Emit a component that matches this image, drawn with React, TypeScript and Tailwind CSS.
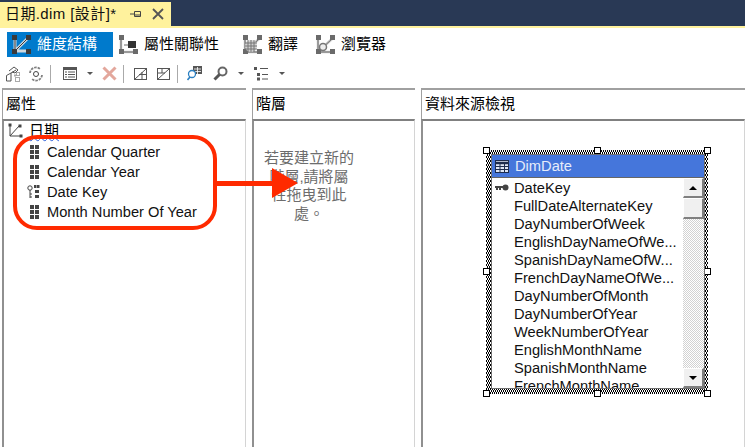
import type { ReactNode } from 'react';

const font = "font-['Liberation_Sans','Noto_Sans_CJK_TC',sans-serif]";

const columns = [
  'DateKey',
  'FullDateAlternateKey',
  'DayNumberOfWeek',
  'EnglishDayNameOfWe...',
  'SpanishDayNameOfW...',
  'FrenchDayNameOfWe...',
  'DayNumberOfMonth',
  'DayNumberOfYear',
  'WeekNumberOfYear',
  'EnglishMonthName',
  'SpanishMonthName',
  'FrenchMonthName',
];

type TabKind = 'dim' | 'attr' | 'trans' | 'browse';

function CubeTabIcon({ active, kind }: { active?: boolean; kind: TabKind }) {
  const halo = active ? '#cfd8de' : '#c9c9c9';
  const node = active ? '#3a3a3a' : '#6a6a6a';
  return (
    <svg width="24" height="22" viewBox="0 0 24 22" fill="none">
      {kind === 'dim' ? (
        <>
          <path d="M5 4v13M5 17h13M6 16L18 4" stroke={halo} strokeWidth="3" />
          <path d="M5 4v13M5 17L18 4" stroke={node} strokeWidth="1" />
        </>
      ) : (
        <>
          <path d="M4 3v15h15" stroke={halo} strokeWidth="2.500" />
          <path d="M4 3v15h15" stroke={node} strokeWidth="1" />
          {kind !== 'attr' && <path d="M5 17L19 4" stroke={halo} strokeWidth="2.500" />}
          {kind !== 'attr' && <path d="M5 17L19 4" stroke={node} strokeWidth="1" />}
        </>
      )}
      <rect x="2" y="1" width="5" height="5" fill={node} />
      {kind !== 'attr' && <rect x="16" y="1" width="5" height="5" fill={node} />}
      <rect x="2" y="15" width="5" height="5" fill={node} />
      <rect x="16" y="15" width="5" height="5" fill={node} />
      {kind === 'attr' && (
        <>
          <path d="M7 11h5" stroke={node} />
          <rect x="11" y="7" width="8" height="7" fill="#333" />
        </>
      )}
      {kind === 'trans' && (
        <>
          <circle cx="10" cy="12" r="6" fill="#d0d0d0" />
          <path d="M4 12h12M4 9h12M4 15h12M7 6v12M10 6v12M13 6v12" stroke="#777" strokeWidth="1" />
        </>
      )}
      {kind === 'browse' && <circle cx="9" cy="13" r="3.500" stroke="#777" strokeWidth="1.500" fill="#eee" />}
    </svg>
  );
}

function ViewTab({ label, kind, active, className = '' }: { label: string; kind: TabKind; active?: boolean; className?: string }) {
  return (
    <div className={`flex h-[25px] items-center gap-[3px] pl-[3px] text-[15px] ${active ? 'bg-[#007acc] pr-[16px] text-white' : 'text-black'} ${className}`}>
      <CubeTabIcon kind={kind} active={active} />
      <span>{label}</span>
    </div>
  );
}

function Sep({ className }: { className: string }) {
  return <div className={`h-[18px] w-px bg-[#aaa] ${className}`} />;
}

function Caret({ className }: { className: string }) {
  return <div className={`h-0 w-0 border-x-[3px] border-t-[3px] border-x-transparent border-t-[#555] ${className}`} />;
}

function Toolbar() {
  return (
    <div className="flex h-[28px] items-center pl-[6px] pb-[1px]">
      <svg width="16" height="16" viewBox="0 0 16 16" fill="none" stroke="#555">
        <path d="M0.500 9.500L5 7v8H0.500zM5 7l5-3M3 5l5-4 4 3-3 3-3-1M9 8.500v2" />
        <rect x="10.500" y="6.500" width="3" height="3" strokeDasharray="1 1" />
        <rect x="9.500" y="11.500" width="4" height="4" strokeDasharray="1 1" />
      </svg>
      <svg className="ml-[6px]" width="16" height="16" viewBox="0 0 16 16" fill="none" stroke="#808080" strokeWidth="1.800">
        <path d="M2 7a6 6 0 0 1 10-4M14 9a6 6 0 0 1-10 4" strokeDasharray="2.500 1" />
        <circle cx="8" cy="8" r="2.500" strokeWidth="1" stroke="#444" />
      </svg>
      <Sep className="ml-[6px]" />
      <svg className="ml-[12px]" width="14" height="13" viewBox="0 0 14 13" fill="none" stroke="#555">
        <rect x="0.500" y="0.500" width="13" height="12" />
        <path d="M0 2h14" strokeWidth="2" />
        <path d="M2 5h2M5 5h7M2 7.500h2M5 7.500h7M2 10h2M5 10h7" strokeWidth="1" />
      </svg>
      <Caret className="ml-[10px]" />
      <svg className="ml-[9px]" width="15" height="15" viewBox="0 0 15 15" stroke="#e3a79c" strokeWidth="3">
        <path d="M1.500 1.500l12 12M13.500 1.500l-12 12" />
      </svg>
      <Sep className="ml-[6px]" />
      <svg className="ml-[10px]" width="13" height="12" viewBox="0 0 13 12" fill="none" stroke="#555">
        <rect x="0.500" y="0.500" width="12" height="11" />
        <path d="M1 11L12 1M5 6.500h7M8 4v7" strokeWidth="1" />
      </svg>
      <svg className="ml-[10px]" width="13" height="12" viewBox="0 0 13 12" fill="none" stroke="#555">
        <rect x="0.500" y="0.500" width="12" height="11" />
        <path d="M1 11L12 1M1 5h7M5 1v4" strokeWidth="1" />
      </svg>
      <Sep className="ml-[7px]" />
      <svg className="ml-[9px]" width="15" height="15" viewBox="0 0 15 15" fill="none">
        <rect x="6" y="0" width="9" height="8" fill="#555" />
        <path d="M7 3h7M7 5.500h7M10.500 1v7" stroke="#fff" strokeWidth="0.800" />
        <circle cx="5" cy="8" r="3.500" fill="#fff" stroke="#2a7fc1" strokeWidth="1.300" />
        <path d="M3 11l-2.500 3" stroke="#2a7fc1" strokeWidth="1.600" />
      </svg>
      <svg className="ml-[11px]" width="15" height="15" viewBox="0 0 15 15" fill="none">
        <circle cx="9.500" cy="5.500" r="4" fill="#fff" stroke="#666" strokeWidth="2" />
        <path d="M6.500 8.500l-5 5" stroke="#555" strokeWidth="3" />
      </svg>
      <Caret className="ml-[10px]" />
      <svg className="ml-[10px]" width="15" height="15" viewBox="0 0 15 15" fill="none" stroke="#555">
        <path d="M0 1h3v3H0zM3 7h3v3H3zM3 11.500h3v3H3z" fill="#555" stroke="none" />
        <path d="M6 2.500h8M8 8.500h6M8 13h6" />
      </svg>
      <Caret className="ml-[10px]" />
    </div>
  );
}

function GridIcon() {
  return (
    <svg width="10" height="14" viewBox="0 0 10 14" fill="#444">
      <rect x="0" y="0" width="4" height="4" />
      <rect x="5" y="0" width="4" height="4" />
      <rect x="0" y="5" width="4" height="4" />
      <rect x="5" y="5" width="4" height="4" />
      <rect x="0" y="10" width="4" height="4" />
      <rect x="5" y="10" width="4" height="4" />
    </svg>
  );
}

function KeyGridIcon() {
  return (
    <svg width="13" height="14" viewBox="0 0 13 14" fill="#444">
      <rect x="7" y="0" width="2.500" height="3" />
      <rect x="10" y="0" width="2.500" height="3" />
      <rect x="8" y="5" width="4" height="3" />
      <rect x="8" y="10" width="4" height="3" />
      <circle cx="3" cy="3" r="2.200" fill="#fff" stroke="#444" />
      <path d="M3 5v8M3 9h2M3 12h2" stroke="#444" fill="none" />
    </svg>
  );
}

function Attribute({ name, isKey }: { name: string; isKey?: boolean }) {
  return (
    <div className="flex h-[20px] items-center text-[14.670px] text-[#111]">
      <div className="flex w-[25px] justify-end pr-[1px]">{isKey ? <KeyGridIcon /> : <GridIcon />}</div>
      <span className="ml-[6px]">{name}</span>
    </div>
  );
}

function Pane({ title, className, children }: { title: string; className: string; children?: ReactNode }) {
  return (
    <div className={`flex flex-col ${className}`}>
      <div className="flex h-[31px] items-center border-t-2 border-l border-[#a0a0a0] pl-[3px] text-[15px] text-black">{title}</div>
      <div className="relative flex-1 border-t-2 border-r border-l-2 border-t-[#808080] border-r-[#d4d4d4] border-l-[#909090]">{children}</div>
    </div>
  );
}

function Handle({ className }: { className: string }) {
  return <div className={`absolute h-[7px] w-[7px] border border-black bg-white ${className}`} />;
}

function ScrollButton({ up }: { up?: boolean }) {
  return (
    <div className="flex h-[20px] w-[21px] shrink-0 items-center justify-center border-t border-r-2 border-b-2 border-l border-t-white border-r-[#808080] border-b-[#808080] border-l-white bg-[#f0f0f0]">
      <div className={`h-0 w-0 border-x-[4px] border-x-transparent ${up ? 'border-b-[4px] border-b-black' : 'border-t-[4px] border-t-black'}`} />
    </div>
  );
}

function TableNode() {
  return (
    <div className="absolute left-[60px] top-[26px] h-[250px] w-[228px]">
      <div className="absolute inset-[3px] bg-[conic-gradient(#000_25%,#fff0_0),conic-gradient(#000_25%,#fff0_0)] bg-[length:2px_4px] bg-[position:0_0,1px_2px]" />
      <Handle className="left-0 top-0" />
      <Handle className="left-[111px] top-0" />
      <Handle className="right-0 top-0" />
      <Handle className="left-0 top-[121px]" />
      <Handle className="right-0 top-[121px]" />
      <Handle className="bottom-0 left-0" />
      <Handle className="bottom-0 left-[111px]" />
      <Handle className="bottom-0 right-0" />
      <div className="absolute bottom-[8px] left-[8px] right-[6px] top-[7px] flex flex-col overflow-hidden border border-[#707070] bg-white">
        <div className="flex h-[23px] shrink-0 items-center gap-[6px] border-b border-[#666] bg-[#4576db] pl-[3px] text-[14.670px] text-[#e6ecfa]">
          <svg width="14" height="13" viewBox="0 0 14 13" fill="none" stroke="#1d2c4e">
            <rect x="0.500" y="0.500" width="13" height="12" fill="#dfe6f5" />
            <path d="M0 3h14" strokeWidth="2.500" />
            <path d="M0 6.500h14M0 9.500h14M5 3v10M9.500 3v10" />
          </svg>
          <span>DimDate</span>
        </div>
        <div className="flex min-h-0 flex-1">
          <div className="min-w-0 flex-1 overflow-hidden pt-[1px]">
            {columns.map((c, i) => (
              <div key={c} className="relative flex h-[18px] items-center whitespace-nowrap pl-[22px] text-[14.670px] text-[#111]">
                {i === 0 && (
                  <svg className="absolute left-[3px] top-[5px]" width="14" height="7" viewBox="0 0 14 7" fill="#444">
                    <circle cx="10.500" cy="3.500" r="3" />
                    <rect x="0" y="2" width="8" height="2" />
                    <rect x="1" y="4" width="2" height="2" />
                    <rect x="4" y="4" width="2" height="2" />
                  </svg>
                )}
                {c}
              </div>
            ))}
          </div>
          <div className="flex w-[21px] shrink-0 flex-col bg-[repeating-conic-gradient(#d2d2d2_0_25%,#fff_0_50%)] bg-[length:2px_2px]">
            <ScrollButton up />
            <div className="h-[21px] w-[21px] border-t border-r-2 border-b-2 border-l border-t-white border-r-[#808080] border-b-[#808080] border-l-white bg-[#f0f0f0]" />
            <div className="flex-1" />
            <ScrollButton />
          </div>
        </div>
      </div>
    </div>
  );
}

export default function App() {
  return (
    <div className={`relative flex h-[447px] w-[745px] flex-col overflow-hidden bg-white ${font}`}>
      {/* Document tab */}
      <div className="flex h-[28px] shrink-0 flex-col bg-[#293955]">
        <div className="flex h-[26px] items-center pt-[2px]">
          <div className="flex h-[24px] w-[171px] items-center bg-[#fff29d] pl-[5px] text-[15px] text-[#111]">
            <span className="tracking-[0.4px]">日期.dim [設計]*</span>
            <svg className="ml-[14px]" width="12" height="12" viewBox="0 0 12 12" fill="none" stroke="#444">
              <path d="M0 6h4M4.500 3.500v5M4.500 3.500h6v5h-6M4.500 7h6" />
            </svg>
            <svg className="ml-[10px]" width="12" height="12" viewBox="0 0 12 12" stroke="#555" strokeWidth="1.800">
              <path d="M1 1l10 10M11 1L1 11" />
            </svg>
          </div>
        </div>
        <div className="h-[2px] bg-[#fff29d]" />
      </div>

      {/* Designer tabs */}
      <div className="flex h-[32px] shrink-0 items-center pl-[7px] pt-[1px]">
        <ViewTab label="維度結構" kind="dim" active />
        <ViewTab label="屬性關聯性" kind="attr" className="ml-[1px]" />
        <ViewTab label="翻譯" kind="trans" className="ml-[19px]" />
        <ViewTab label="瀏覽器" kind="browse" className="ml-[13px]" />
      </div>

      <Toolbar />

      {/* Panes */}
      <div className="flex min-h-0 flex-1 pl-[2px]">
        <Pane title="屬性" className="w-[244px]">
          <div className="pl-[3px]">
            <div className="flex h-[20px] items-center text-[15px] text-black">
              <svg width="16" height="16" viewBox="0 0 16 16" fill="none" stroke="#444">
                <path d="M3 2v11h11M3 13l9-10" />
                <rect x="2" y="1" width="2" height="2" fill="#444" />
                <rect x="12" y="2" width="2" height="2" fill="#444" />
                <rect x="13" y="12" width="2" height="2" fill="#444" />
              </svg>
              <span className="ml-[6px] underline decoration-wavy decoration-[#2b5fd9] decoration-1">日期</span>
            </div>
            <div className="mt-[1px] pl-[9px]">
              <Attribute name="Calendar Quarter" />
              <Attribute name="Calendar Year" />
              <Attribute name="Date Key" isKey />
              <Attribute name="Month Number Of Year" />
            </div>
          </div>
        </Pane>
        <Pane title="階層" className="ml-[6px] w-[163px]">
          <p className="ml-[10px] mt-[28px] w-[90px] text-center text-[15px] leading-[18.500px] text-[#6d6d6d]">
            若要建立新的<br />階層,請將屬<br />性拖曳到此<br />處。
          </p>
        </Pane>
        <Pane title="資料來源檢視" className="ml-[6px] flex-1">
          <TableNode />
        </Pane>
      </div>

      {/* Red annotation */}
      <div className="absolute left-[13px] top-[135px] h-[95px] w-[204px] rounded-[24px] border-[4px] border-[#ff2a00]" />
      <div className="absolute left-[217px] top-[181px] h-[5px] w-[56px] bg-[#ff2a00]" />
      <div className="absolute left-[272px] top-[168px] h-0 w-0 border-y-[15px] border-l-[26px] border-y-transparent border-l-[#ff2a00]" />
    </div>
  );
}
